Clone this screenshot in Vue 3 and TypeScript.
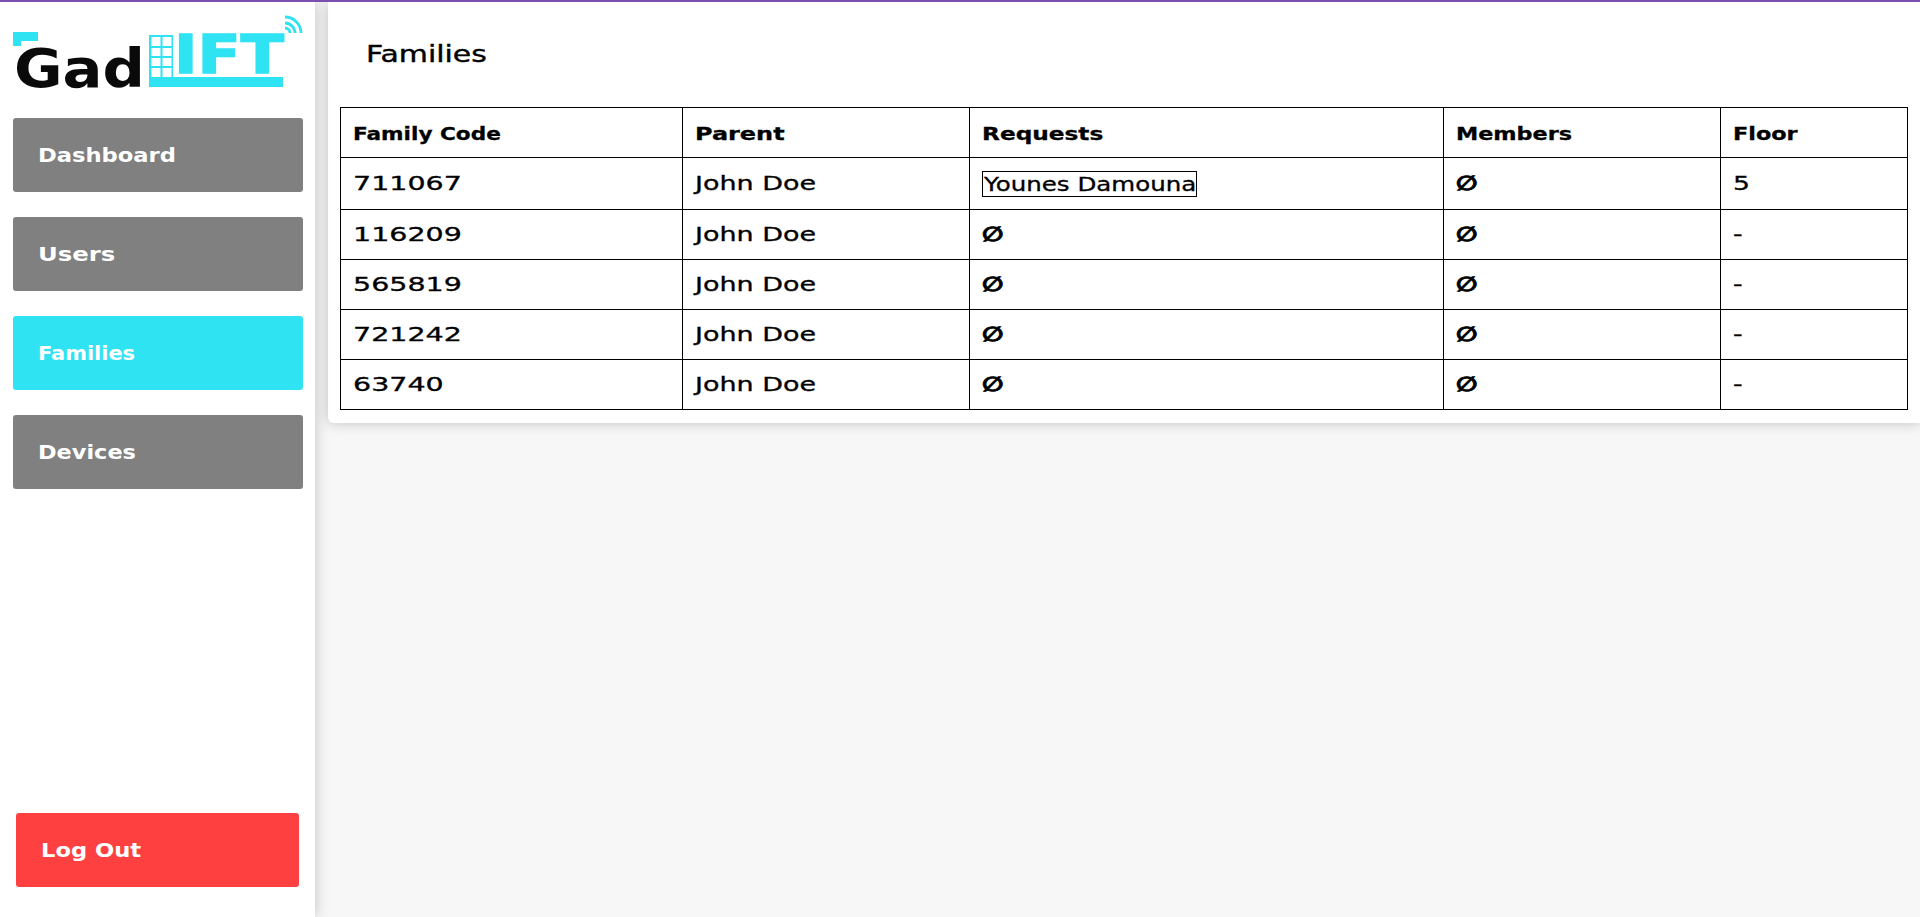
<script setup lang="ts">
import { ref } from 'vue'

// the original's wide typeface isn't installed, so labels carry a horizontal stretch
const navItems = ref([
  { name: 'Dashboard', active: false, sx: 1.19 },
  { name: 'Users', active: false, sx: 1.28 },
  { name: 'Families', active: true, sx: 1.1 },
  { name: 'Devices', active: false, sx: 1.18 }
])

const columns = ref([
  { name: 'Family Code', sx: 1.2 },
  { name: 'Parent', sx: 1.33 },
  { name: 'Requests', sx: 1.29 },
  { name: 'Members', sx: 1.24 },
  { name: 'Floor', sx: 1.24 }
])

const families = ref([
  { code: '711067', parent: 'John Doe', request: 'Younes Damouna', members: '∅', floor: '5' },
  { code: '116209', parent: 'John Doe', request: '', members: '∅', floor: '-' },
  { code: '565819', parent: 'John Doe', request: '', members: '∅', floor: '-' },
  { code: '721242', parent: 'John Doe', request: '', members: '∅', floor: '-' },
  { code: '63740', parent: 'John Doe', request: '', members: '∅', floor: '-' }
])
</script>

<template>
  <div class="page">
    <aside class="sidebar">
      <svg class="logo" width="290" height="88" viewBox="0 0 290 88">
        <path d="M0 17h25v9H8v5H0z" fill="#2fe3f2" />
        <text x="1" y="72" class="logo-text" fill="#0a0a0a" textLength="131" lengthAdjust="spacingAndGlyphs">Gad</text>
        <g fill="#2fe3f2">
          <rect x="136" y="20" width="24" height="45" />
          <rect x="136" y="62" width="134" height="10" />
          <text x="161" y="58" class="logo-text logo-lift" textLength="110" lengthAdjust="spacingAndGlyphs">IFT</text>
        </g>
        <path d="M138.500 22h9v9h-9zM149.500 22h9v9h-9zM138.500 33h9v8h-9zM149.500 33h9v8h-9zM138.500 43h9v8h-9zM149.500 43h9v8h-9zM138.500 53h9v9h-9zM149.500 53h9v9h-9z" fill="#fff" />
        <g fill="none" stroke="#2fe3f2" stroke-width="2.800">
          <path d="M272 2a16 16 0 0 1 16 16" />
          <path d="M272 8a10 10 0 0 1 10 10" />
          <path d="M272 13a5 5 0 0 1 5 5" />
        </g>
      </svg>
      <nav class="nav">
        <a v-for="item in navItems" :key="item.name" class="nav-item" :class="{ active: item.active }">
          <span class="wide" :style="{ '--sx': item.sx }">{{ item.name }}</span>
        </a>
      </nav>
      <a class="logout"><span class="wide" style="--sx: 1.19">Log Out</span></a>
    </aside>
    <main class="main">
      <section class="card">
        <h1 class="title"><span class="wide" style="--sx: 1.3">Families</span></h1>
        <table class="table">
          <colgroup>
            <col class="col-code" />
            <col class="col-parent" />
            <col class="col-requests" />
            <col class="col-members" />
            <col />
          </colgroup>
          <thead>
            <tr>
              <th v-for="col in columns" :key="col.name">
                <span class="wide head" :style="{ '--sx': col.sx }">{{ col.name }}</span>
              </th>
            </tr>
          </thead>
          <tbody>
            <tr v-for="row in families" :key="row.code">
              <td><span class="wide" style="--sx: 1.5">{{ row.code }}</span></td>
              <td><span class="wide" style="--sx: 1.42">{{ row.parent }}</span></td>
              <td>
                <span v-if="row.request" class="request"><span class="wide" style="--sx: 1.29">{{ row.request }}</span></span>
                <span v-else class="wide empty">∅</span>
              </td>
              <td><span class="wide empty">{{ row.members }}</span></td>
              <td><span class="wide" style="--sx: 1.4">{{ row.floor }}</span></td>
            </tr>
          </tbody>
        </table>
      </section>
    </main>
  </div>
</template>

<style>
html,
body {
  margin: 0;
  background: #f7f7f7;
}
</style>

<style scoped>
.page {
  display: flex;
  height: 917px;
  box-sizing: border-box;
  border-top: 2px solid #7a4fb0;
  overflow: hidden;
  font-family: "DejaVu Sans", sans-serif;
  color: #000;
}

.wide {
  display: inline-block;
  transform: scaleX(var(--sx, 1));
  transform-origin: left center;
  white-space: nowrap;
}

.sidebar {
  width: 315px;
  flex-shrink: 0;
  box-sizing: border-box;
  background: #fff;
  box-shadow: 0 0 14px rgba(0, 0, 0, 0.22);
  display: flex;
  flex-direction: column;
  padding: 13px 12px 30px 13px;
  z-index: 1;
}

.logo {
  display: block;
  flex-shrink: 0;
}

.logo-text {
  font-family: "DejaVu Sans", sans-serif;
  font-weight: 700;
  font-size: 54px;
}

.logo-lift {
  stroke: #2fe3f2;
  stroke-width: 1.5px;
}

.nav {
  display: flex;
  flex-direction: column;
  gap: 25px;
  margin-top: 15px;
}

.nav-item,
.logout {
  display: flex;
  align-items: center;
  height: 74px;
  padding-left: 25px;
  border-radius: 3px;
  color: #fff;
  font-size: 19px;
  font-weight: 700;
  background: #808080;
}

.nav-item.active {
  background: #2fe3f2;
}

.logout {
  margin: auto 4px 0 3px;
  background: #ff4040;
}

.main {
  flex: 1;
  padding-left: 13px;
}

.card {
  background: #fff;
  border-bottom-left-radius: 6px;
  box-shadow: 0 0 14px rgba(0, 0, 0, 0.22);
  padding: 0 12px 13px 12px;
}

.title {
  margin: 0;
  padding-left: 26px;
  height: 105px;
  line-height: 104px;
  font-size: 23px;
  font-weight: 400;
  -webkit-text-stroke: 0.4px #000;
}

.table {
  width: 100%;
  table-layout: fixed;
  border-collapse: collapse;
  font-size: 19px;
  line-height: 25px;
  -webkit-text-stroke: 0.3px #000;
}

.col-code {
  width: 342px;
}

.col-parent {
  width: 287px;
}

.col-requests {
  width: 474px;
}

.col-members {
  width: 277px;
}

.table th,
.table td {
  border: 1px solid #000;
  padding: 12px;
  text-align: left;
}

.table th {
  font-weight: 700;
  font-size: 18px;
}

.head {
  position: relative;
  top: 1px;
}

.request {
  display: inline-block;
  vertical-align: top;
  box-sizing: border-box;
  width: 215px;
  height: 26px;
  margin-top: 1px;
  border: 1px solid #000;
  padding-left: 1px;
  line-height: 24px;
}

.empty {
  --sx: 1.25;
  font-weight: 700;
  font-size: 20px;
  vertical-align: top;
  -webkit-text-stroke: 0.8px #000;
}
</style>
